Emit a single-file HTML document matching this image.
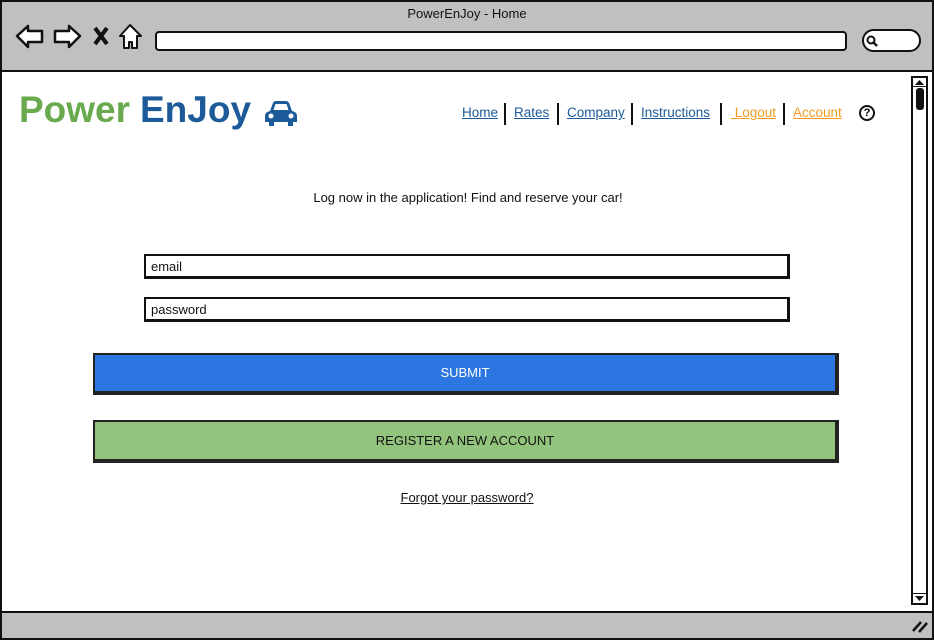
<!DOCTYPE html>
<html><head><meta charset="utf-8"><style>
*{margin:0;padding:0;box-sizing:border-box}
body{width:934px;height:640px;position:relative;background:#fff;font-family:"Liberation Sans",sans-serif;overflow:hidden}
.a{position:absolute}
.nav{position:absolute;top:105px;font-size:13.5px;text-decoration:underline;color:#1d5a9a}
.sep{position:absolute;top:103px;width:2px;height:22px;background:#111}
.inp{position:absolute;left:144px;width:646px;height:25px;border:2px solid #111;border-right-width:3px;border-bottom-width:3px;font-size:13px;padding:3px 5px;color:#111}
.btn{position:absolute;left:93px;width:746px;border:2px solid #222;border-right-width:4px;border-bottom-width:4px;text-align:center;font-size:13px}
</style></head><body>
<div class="a" style="left:0;top:0;width:934px;height:640px;border:2px solid #111"></div>
<div class="a" style="left:2px;top:2px;width:930px;height:70px;background:#c0c0c0;border-bottom:2px solid #111"></div>
<div class="a" style="left:0;top:6px;width:934px;text-align:center;font-size:13px;color:#111">PowerEnJoy - Home</div>
<svg class="a" style="left:14px;top:22px" width="135" height="30" viewBox="0 0 135 30">
<path d="M3 14 L14 4 L14 9 L28 9 L28 20 L14 20 L14 25 Z" fill="#fff" stroke="#111" stroke-width="2.5" stroke-linejoin="round"/>
<path d="M66 14 L55 4 L55 9 L41 9 L41 20 L55 20 L55 25 Z" fill="#fff" stroke="#111" stroke-width="2.5" stroke-linejoin="round"/>
<path d="M81 6 L93 22 M93 6 L81 22" stroke="#111" stroke-width="4"/>
<path d="M116 3 L106 14 L110 14 L110 26 L115 26 L115 20 L118 20 L118 26 L123 26 L123 14 L127 14 Z" fill="#fff" stroke="#111" stroke-width="2" stroke-linejoin="round"/>
</svg>
<div class="a" style="left:155px;top:31px;width:692px;height:20px;background:#fff;border:2px solid #111;border-radius:4px"></div>
<div class="a" style="left:862px;top:29px;width:59px;height:23px;background:#fff;border:2px solid #111;border-radius:12px"></div>
<svg class="a" style="left:866px;top:35px" width="12" height="12"><circle cx="5" cy="5" r="3.5" fill="none" stroke="#111" stroke-width="2"/><path d="M7.5 7.5 L11 11" stroke="#111" stroke-width="2.5"/></svg>
<div class="a" style="left:19px;top:89px;font-size:37px;font-weight:bold;color:#6aaa4e">Power</div>
<div class="a" style="left:140px;top:89px;font-size:37px;font-weight:bold;color:#1d5a9a">EnJoy</div>
<svg class="a" style="left:264px;top:100px" width="34" height="28" viewBox="0 0 34 28">
<path d="M6 11 L9 3 Q10 1 12 1 L22 1 Q24 1 25 3 L28 11 Q33 12 33 16 L33 22 L29 22 L29 26 L24 26 L24 22 L10 22 L10 26 L5 26 L5 22 L1 22 L1 16 Q1 12 6 11 Z" fill="#1d5a9a"/>
<path d="M9.5 10 L11.5 4 L22.5 4 L24.5 10 Z" fill="#fff"/>
<circle cx="7" cy="16" r="2.5" fill="#fff"/><circle cx="27" cy="16" r="2.5" fill="#fff"/>
</svg>
<div class="nav" style="left:462px">Home</div>
<div class="sep" style="left:504px"></div>
<div class="nav" style="left:514px">Rates</div>
<div class="sep" style="left:557px"></div>
<div class="nav" style="left:567px">Company</div>
<div class="sep" style="left:631px"></div>
<div class="nav" style="left:641px">Instructions</div>
<div class="sep" style="left:720px"></div>
<div class="nav" style="left:731px;color:#f39a1e">&nbsp;Logout</div>
<div class="sep" style="left:783px"></div>
<div class="nav" style="left:793px;color:#f39a1e">Account</div>
<div class="a" style="left:859px;top:105px;width:16px;height:16px;border:2px solid #111;border-radius:50%;font-size:11px;font-weight:bold;text-align:center;line-height:12px">?</div>
<div class="a" style="left:911px;top:76px;width:17px;height:529px;border:2px solid #111;background:#fff"></div>
<div class="a" style="left:913px;top:78px;width:13px;height:9px;border-bottom:1px solid #111"></div>
<svg class="a" style="left:914px;top:79px" width="11" height="7"><path d="M1 6 L5.5 1 L10 6Z" fill="#111"/></svg>
<div class="a" style="left:916px;top:88px;width:8px;height:22px;background:#111;border-radius:3px"></div>
<div class="a" style="left:913px;top:593px;width:13px;height:10px;border-top:1px solid #111"></div>
<svg class="a" style="left:914px;top:595px" width="11" height="7"><path d="M1 1 L5.5 6 L10 1Z" fill="#111"/></svg>
<div class="a" style="left:2px;top:611px;width:930px;height:27px;background:#c0c0c0;border-top:2px solid #111"></div>
<svg class="a" style="left:910px;top:618px" width="20" height="16"><path d="M3 13 L11 4 M9 14 L17 5" stroke="#111" stroke-width="2.5"/></svg>
<div class="a" style="left:0;top:190px;width:934px;text-align:center;font-size:13px;color:#111;padding-left:2px">Log now in the application! Find and reserve your car!</div>
<div class="inp" style="top:254px">email</div>
<div class="inp" style="top:297px">password</div>
<div class="btn" style="top:353px;height:42px;background:#2b76e0;color:#fff;line-height:36px">SUBMIT</div>
<div class="btn" style="top:420px;height:43px;background:#93c47d;color:#111;line-height:37px">REGISTER A NEW ACCOUNT</div>
<div class="a" style="left:0;top:490px;width:934px;text-align:center;font-size:13px;color:#111;text-decoration:underline">Forgot your password?</div>
</body></html>
